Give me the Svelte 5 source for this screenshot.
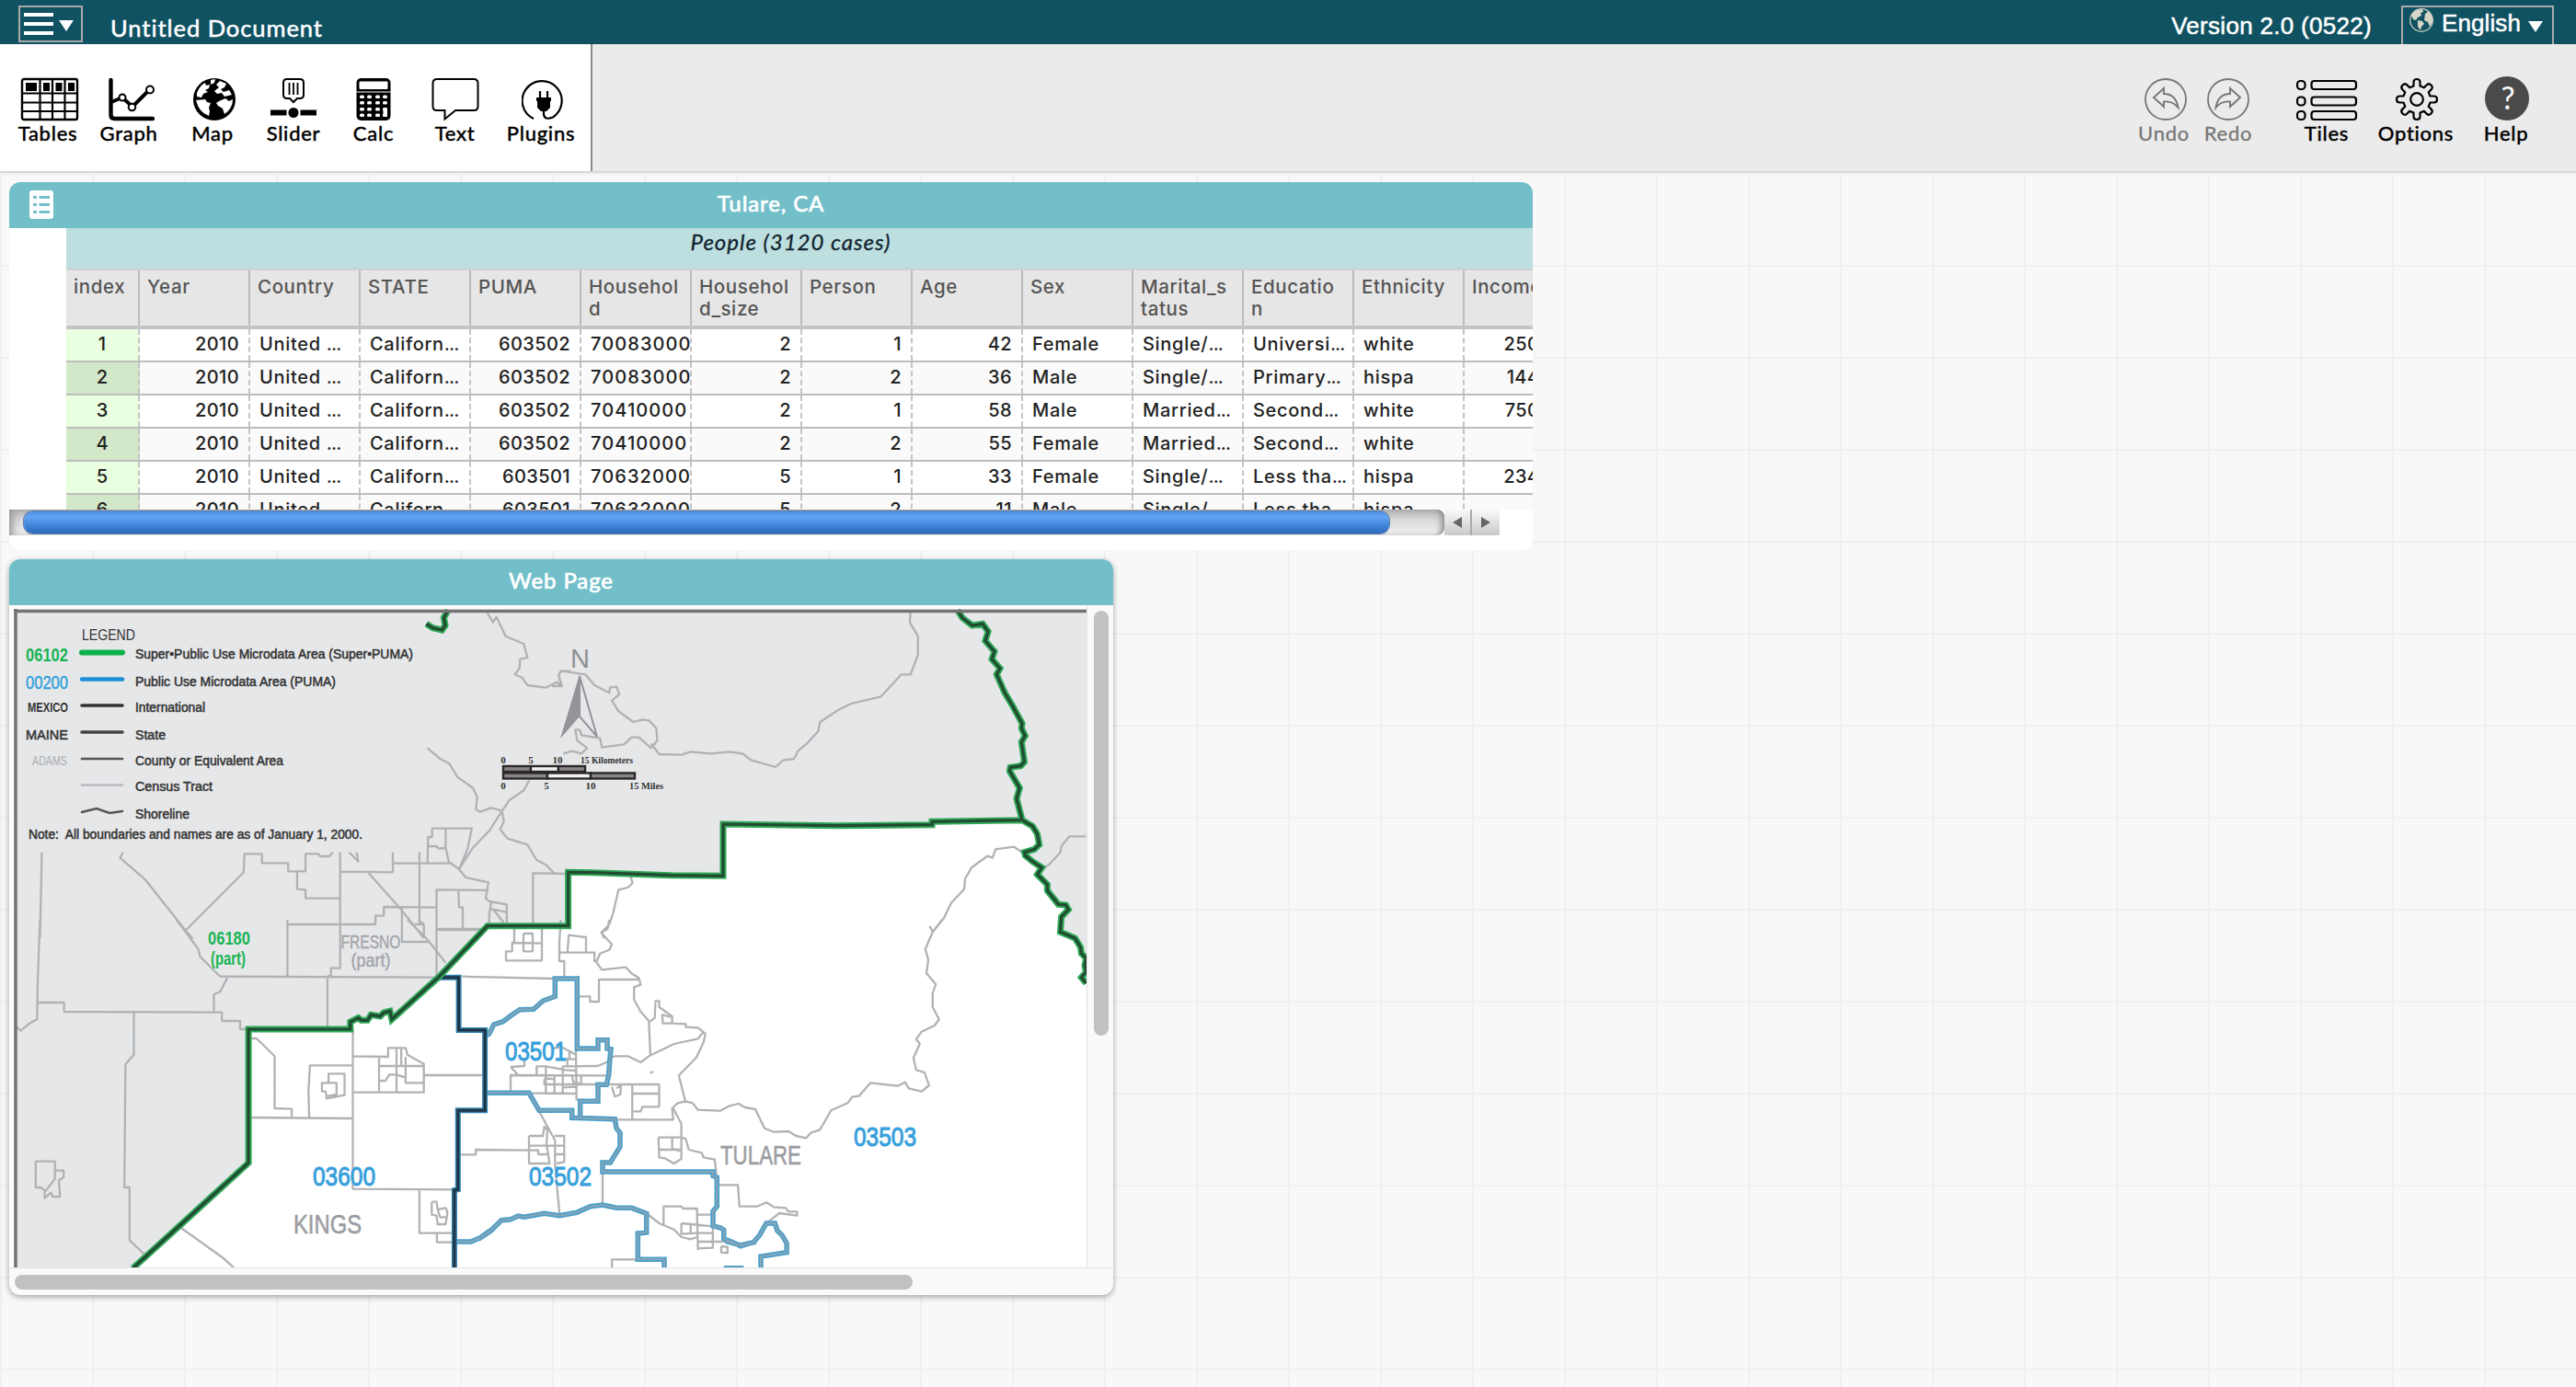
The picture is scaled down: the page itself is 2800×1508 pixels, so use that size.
<script>
  const tools = [
    { id: 'tables', label: 'Tables' },
    { id: 'graph', label: 'Graph' },
    { id: 'map', label: 'Map' },
    { id: 'slider', label: 'Slider' },
    { id: 'calc', label: 'Calc' },
    { id: 'text', label: 'Text' },
    { id: 'plugins', label: 'Plugins' }
  ];

  const columns = ['index', 'Year', 'Country', 'STATE', 'PUMA', 'Househol d', 'Househol d_size', 'Person', 'Age', 'Sex', 'Marital_s tatus', 'Educatio n', 'Ethnicity', 'Income'];
  const kinds = ['idx', 'num', 'txt', 'txt', 'num', 'long', 'num', 'num', 'num', 'txt', 'txt', 'txt', 'txt', 'num'];
  const rows = [
    ['1', '2010', 'United ...', 'Californ...', '603502', '700830000', '2', '1', '42', 'Female', 'Single/...', 'Universi...', 'white', '25000'],
    ['2', '2010', 'United ...', 'Californ...', '603502', '700830000', '2', '2', '36', 'Male', 'Single/...', 'Primary...', 'hispa', '14400'],
    ['3', '2010', 'United ...', 'Californ...', '603502', '70410000', '2', '1', '58', 'Male', 'Married...', 'Second...', 'white', '75000'],
    ['4', '2010', 'United ...', 'Californ...', '603502', '70410000', '2', '2', '55', 'Female', 'Married...', 'Second...', 'white', ''],
    ['5', '2010', 'United ...', 'Californ...', '603501', '70632000', '5', '1', '33', 'Female', 'Single/...', 'Less tha...', 'hispa', '23400'],
    ['6', '2010', 'United ...', 'Californ...', '603501', '70632000', '5', '2', '11', 'Male', 'Single/...', 'Less tha...', 'hispa', '']
  ];

  // Map sheets: origin and units per pixel of each surveyed block.
  const sheets = {
    A: [0, 600, 620 / 1568, 1 / 3],
    B: [600, 600, 630 / 1568, 1 / 3],
    C: [0, 1000, 620 / 1568, 1 / 3],
    D: [600, 1000, 630 / 1568, 1 / 3],
    E: [520, 980, 1 / 3, 1 / 3]
  };
  const project = (key, list) => {
    const [ox, oy, sx, sy] = sheets[key];
    return list.trim().split(/\s+/).map((p) => {
      const [x, y] = p.split(',').map(Number);
      return `${(ox + x * sx).toFixed(1)},${(oy + y * sy).toFixed(1)}`;
    }).join(' ');
  };
  const path = (key, lists) => lists.map((l) => 'M' + project(key, l)).join(' ');

  const west = project('C', '365,1137 492,1000 683,793 683,357 963,357 963,333 985,320 993,328 1010,328 1020,310 1045,315 1055,303 1072,298 1077,325 1205,188 1340,20') + ' ' +
    project('A', '1562,1220 1562,1045') + ' ' + project('B', '110,1046 322,1055 463,1057 463,888 770,893 1028,890 1028,880 1270,875');
  const eastTop = project('B', '1097,190 1110,215 1137,240 1165,235 1180,260 1172,290 1197,325 1190,350 1212,380 1203,400 1225,460 1245,500 1272,560 1270,575 1280,600 1270,620 1278,685 1268,698 1240,703 1238,715 1265,770 1257,805 1272,875');
  const eastLow = project('B', '1272,875 1300,895 1313,920 1318,955 1305,970 1278,980 1280,990 1300,1010 1325,1030 1313,1052 1340,1085 1340,1105 1370,1150 1390,1152 1397,1167 1378,1190 1375,1240 1415,1260') + ' ' +
    project('D', '1430,90 1432,110 1445,125 1441,150 1445,170 1432,188 1445,207');
  const corner = project('A', '1172,235 1190,248 1215,255 1224,240 1220,215 1232,190');

  const green = [`M${west}`, `M${eastTop}`, `M${eastLow}`, `M${corner}`].join(' ');
  const county = `M${west} ${eastLow} 1184,1380 144,1380Z`;

  const blue = path('E', [
    '20,440 35,432 50,402 80,392 110,370 135,353 180,352 210,325 250,310 250,252 322,252 322,480 390,480 390,452 420,452 420,480 432,482 428,520 425,565 418,598 390,598 390,652 332,652 332,706',
    '20,625 165,625 198,682 305,682 305,706 445,710 450,740 462,755 462,800 430,852 405,852 405,882 765,882 765,895 778,900 778,995 765,1010 765,1058 790,1065 800,1072 800,1100 830,1112 855,1124 885,1115 905,1110',
    '0,1102 40,1075 75,1040 105,1037 130,1026 150,1030 215,1018 265,1025 320,1015 365,995 405,990 450,1000 500,1000 548,1018 548,1080 520,1083 520,1168 606,1168 606,1200',
    '800,1196 865,1196'
  ]) + path('C', ['1250,1050 1295,1050 1320,1037 1350,1012']) +
    path('D', ['470,1048 510,1062 545,1052 562,1028 580,990 603,990 610,1015 622,1028 635,1055 635,1085 565,1098 565,1136']);
  const navy = path('C', ['1205,188 1261,188 1261,360 1333,360 1333,622 1259,622 1259,880 1249,882 1249,1137']);

  const tract = [
    path('A', [
      '115,980 110,1260', '338,980 330,998 400,1070 510,1235 530,1262', '510,1235 670,1045 672,985 720,985 720,1015 792,1015 792,1042 840,1042 840,985 875,985 880,993 905,993 915,980',
      '817,1042 817,1100 840,1102 840,1130 935,1130', '935,980 935,1260', '935,1043 1080,1045 1080,980', '960,980 985,1010 980,980', '1010,1043 1105,1170 1165,1260',
      '1080,1016 1240,1016 1262,1035', '1153,980 1153,1215', '1175,1016 1177,930 1188,930 1188,902 1297,902 1285,970 1262,1035', '1225,902 1225,965 1235,1016', '1177,960 1200,960 1205,968 1225,966',
      '790,1260 790,1215 1032,1215 1032,1187 1055,1187 1055,1158 1200,1160', '1105,1160 1105,1260', '1200,1260 1200,1102 1343,1104', '1260,1102 1262,1160 1272,1160 1272,1230', '1200,1230 1340,1230',
      '1140,1215 1165,1215 1165,1255', '1262,1035 1280,1062 1310,1070 1343,1078 1335,1130 1350,1145 1345,1180 1345,1215', '1345,1140 1393,1150 1393,1210', '1350,1165 1393,1175', '1355,1165 1385,1210',
      '1262,1035 1300,965 1345,910 1380,845 1400,810 1440,778 1455,745', '1175,640 1210,675 1235,690 1258,735 1300,770 1312,800 1308,840 1320,848 1350,835 1380,845 1385,880 1375,905 1395,935 1450,955 1475,1005 1500,1020 1525,1050',
      '1465,1216 1465,1048 1562,1050', '1340,200 1355,230 1365,212 1390,275 1440,300 1450,345 1430,350 1428,380 1415,400 1435,410 1450,435 1500,443 1530,425 1545,438 1535,400 1545,388 1568,388'
    ]),
    path('B', [
      '0,438 25,438 18,400 25,388 90,400 115,435 155,460 157,442 175,440 182,465 162,485 180,520 220,555 245,547 262,550 282,575 285,615 268,640 235,605 215,605 195,628 135,638 130,608 80,598 75,580 63,580 68,615 95,640 80,658 55,650 30,658',
      '268,625 290,660 350,662 375,652 430,658 480,652 515,658 540,680 605,702 625,680 655,675 665,650 690,625 720,585 725,555 775,515 810,495 890,472 945,400 970,400 990,335 990,275 968,230 970,195',
      '1445,928 1400,928 1378,960 1375,980 1345,1020 1325,1035', '1272,980 1250,962 1200,970 1192,998 1178,992 1135,1030 1118,1065 1115,1100 1080,1145 1060,1195 1030,1240 1022,1222',
      '212,1055 218,1080 205,1095 180,1102 165,1180 155,1215 135,1240 140,1260'
    ]),
    path('C', [
      '110,0 104,190 102,325 85,335 57,362 42,345', '104,270 176,270 176,300 610,302 610,330 660,330 660,357 683,357', '368,300 368,440 345,472 342,873 356,873 356,1045 400,1095',
      '485,0 545,95 550,120 605,185 1200,188', '625,190 605,235 588,243 588,300', '790,0 790,185', '935,0 935,158 910,158 910,182 900,185 900,350', '1105,0 1105,72 1180,72 1225,140', '1120,0 1165,52 1180,72',
      '1200,0 1200,188', '1200,33 1320,33', '1150,0 1165,15 1165,52', '1270,185 1525,192', '683,387 705,387 755,445 755,615 802,617 802,650', '850,645 848,560 852,475 970,475', '683,645 970,648', '970,357 970,878 1250,880',
      '970,445 1067,447 1067,418 1115,418 1120,440 1165,470 1165,563 970,562', '1042,447 1042,562', '1042,477 1165,477', '1090,418 1090,562', '1103,418 1103,475', '1115,447 1115,532 1165,532', '1042,525 1060,525 1070,505 1090,505 1115,515',
      '1165,507 1333,507', '903,532 903,502 947,502 947,572 898,583 895,560 885,560 885,532 925,532 925,570 900,575', '1153,880 1153,1022 1249,1022', '1201,1022 1201,1052 1249,1052', '1259,766 1308,766 1308,750 1455,752',
      '98,788 151,788 151,845 125,885 112,873 98,873 98,788', '151,818 175,818 175,840 162,850 165,903 145,903 140,890 123,908 123,880', '495,1003 580,1075 615,1105 645,1137', '1187,920 1200,920 1203,945 1225,940 1230,955 1225,993 1203,993 1200,965 1187,962 1187,920', '1203,945 1210,970 1225,970'
    ]),
    path('D', [
      '155,0 150,30 133,42 162,80 155,98 130,110 120,138 135,163 200,155 215,175 235,190 240,212 222,220 222,260 240,300 262,330 266,440', '115,138 115,107 18,107', '42,107 45,50 92,57 92,107', '24,0 20,75 20,135 33,135 33,190',
      '72,250 103,250 103,267 127,267 127,195 238,195', '262,335 278,320 280,265 290,265 290,285 325,315 325,338 300,338 298,310 325,318', '325,338 362,340 362,350 395,352 415,372 410,400 390,450 343,508 362,598',
      '160,450 170,445 205,445 240,465 262,445 330,405 395,388 410,365', '75,537 290,537 290,610 245,610 240,625 218,625', '217,537 217,650', '217,567 290,567', '170,652 328,652 325,615 340,598 362,592 380,598 395,620 455,623 480,607 505,600 522,612 550,618 575,680 600,692 640,690 660,705 688,712 700,695 725,685 755,622 800,598 812,578 830,575 862,532 935,542 955,530 965,550 1000,560 1020,540 1008,498 985,490 978,450 995,405 985,390 1000,365 1035,345 1047,325 1030,285 1030,240 1038,210 1013,175 1018,130 1010,95 1030,40 1055,0',
      '1030,40 1022,20', '328,615 350,665 350,710 362,715 370,750 405,760 410,775 440,782 445,830', '288,710 350,710 350,780 330,795 305,778 290,775 288,710', '288,750 350,750', '325,710 325,745 345,755',
      '137,825 137,930', '450,865 503,865 507,935 555,935 580,922 600,937 632,940 640,952 663,952 663,965 615,957 585,985', '258,960 290,990 330,1010 350,1035 375,1042 392,1035', '302,995 302,935 350,935 355,942 392,942 395,1078', '395,962 432,962', '350,990 435,1000 435,1070 395,1072', '350,990 350,1025 392,1022', '375,993 375,1022', '395,1022 435,1022', '395,1050 470,1050', '458,1065 475,1067 475,1087 458,1085 458,1065', '162,1136 162,1108 230,1108', '162,545 170,577 185,570 187,540 175,550'
    ]),
    path('E', [
      '117,90 117,135 110,135 110,163 90,163 90,193 207,193 207,90', '110,135 207,137', '147,105 177,105 177,163 147,163 147,105', '105,540 150,537 150,515', '105,540 128,565', '105,625 105,567 425,568', '105,625 320,627', '190,567 190,538 220,538 285,550 320,552',
      '318,480 320,650', '220,538 220,625', '248,567 248,625', '275,537 275,625', '305,567 310,590 335,595 335,567', '215,577 248,580', '212,597 590,597', '275,607 320,605', '275,538 390,537 432,518', '215,598 215,580', '290,510 290,535', '240,480 270,475 300,490 318,500', '297,490 297,515 320,515',
      '198,685 250,780 250,860 265,1025', '165,765 210,765 215,735 225,745 222,790 232,855 165,855 165,765', '165,797 280,797', '165,812 195,812 195,825 225,825', '248,765 280,765 280,850 255,855', '250,825 280,825', '570,555 560,560'
    ])
  ].join(' ');

  const legend = [
    { y: 403 + 313, mark: 709.5, name: 'Super•Public Use Microdata Area (Super•PUMA)', w: 302, color: '#0db14b', sw: 6 },
    { y: 746, mark: 738.5, name: 'Public Use Microdata Area (PUMA)', w: 218, color: '#1c90d4', sw: 4.5 },
    { y: 774, mark: 767, name: 'International', w: 76, color: '#333', sw: 3.6 },
    { y: 804, mark: 796, name: 'State', w: 33, color: '#444', sw: 3.6 },
    { y: 832, mark: 825, name: 'County or Equivalent Area', w: 161, color: '#555', sw: 2.6 },
    { y: 860, mark: 853.5, name: 'Census Tract', w: 84, color: '#b9bbbd', sw: 2.6 },
    { y: 890, mark: 0, name: 'Shoreline', w: 59, color: '#555', sw: 2.6 }
  ];
</script>

<div class="app">
  <header class="menubar">
    <button class="hamburger" aria-label="Menu">
      <svg width="56" height="28" viewBox="0 0 56 28"><path d="M0 4h32M0 14h32M0 24h32" stroke="#fff" stroke-width="4" /><path d="M38 10h16l-8 12z" fill="#fff" /></svg>
    </button>
    <span class="doc">Untitled Document</span>
    <span class="version">Version 2.0 (0522)</span>
    <button class="lang">
      <svg class="globe" width="28" height="28" viewBox="0 0 28 28"><circle cx="14" cy="14" r="12.3" fill="none" stroke="#d5d5c8" stroke-width="1.2" /><path d="M3 8l5-5 7-1 1 3-3 1 1 3-4 2-2 3-3-1-2-4zM10 14l5 1 2 3-3 3-1 4-3-4zM18 7l4-3 4 6 0 6-3 5-2-5-4-2z" fill="#d5d5c8" /></svg>
      <span>English</span>
      <svg width="16" height="14" viewBox="0 0 16 14"><path d="M0 1h16l-8 12z" fill="#fff" /></svg>
    </button>
  </header>

  <nav class="toolbar">
    <div class="shelf">
      {#each tools as tool}
        <button class="tool {tool.id}">
          {#if tool.id === 'tables'}
            <svg width="64" height="48" viewBox="0 0 64 48"><rect x="2" y="2" width="60" height="44" rx="2" fill="#fff" stroke="#000" stroke-width="2.4" /><path d="M2 17.500h60M2 27.500h60M2 37h60M21.500 2v44M35 2v44M48.500 2v44" stroke="#000" stroke-width="2.200" /><path d="M6 6h12v9H6zM25 6h7v9h-7zM38.500 6h7v9h-7zM52 6h7v9h-7z" /></svg>
          {:else if tool.id === 'graph'}
            <svg width="52" height="48" viewBox="0 0 52 48"><path d="M3.500 3v38q0 4 4 4H49" fill="none" stroke="#000" stroke-width="4.400" stroke-linecap="round" /><path d="M4 27l12-5 11 10L46 13" fill="none" stroke="#000" stroke-width="4" /><g fill="#fff" stroke="#000" stroke-width="2"><circle cx="16" cy="22" r="3.500" /><circle cx="26.500" cy="32.500" r="3.800" /><circle cx="46" cy="13.500" r="4" /></g></svg>
          {:else if tool.id === 'map'}
            <svg width="48" height="48" viewBox="0 0 48 48"><circle cx="24" cy="24" r="22" fill="#000" stroke="#000" stroke-width="2" /><path d="M5 17q3-8 9-11l1 3 4-1-1 4-4 2 3 2-5 2-2 4-5-1zM4 25l10-1 2 3 4 1-2 5 1 4-1 5q-11-4-14-17zM30 4l7 3-2 4-4 2 3 3 6-2 3 5-8 2-3-4-5 1-3-3 5-4-3-3zM29 26l7-3 4 3 4-2q0 10-9 16l-2-6-5-3-2-3zM20 3l5-1-1 4-4 2z" fill="#fff" /></svg>
          {:else if tool.id === 'slider'}
            <svg width="52" height="48" viewBox="0 0 52 48"><path d="M19 2h14q4 0 4 4v13q0 4-4 4h-3l-4 4-4-4h-3q-4 0-4-4V6q0-4 4-4z" fill="#fff" stroke="#000" stroke-width="2" /><path d="M21.500 6v13M26 6v13M30.500 6v13" stroke="#000" stroke-width="1.800" /><path d="M1 38.500h17.500M33.500 38.500H51" stroke="#000" stroke-width="6" /><circle cx="26" cy="38.500" r="5.500" /></svg>
          {:else if tool.id === 'calc'}
            <svg width="40" height="48" viewBox="0 0 40 48"><rect x="1.500" y="1" width="37" height="46" rx="5" /><rect x="4.500" y="4.500" width="31" height="8.500" rx="1" fill="#fff" /><path d="M1.500 16h37" stroke="#fff" stroke-width="1" /><g fill="#fff">{#each [19.5, 26, 33, 39.5] as y}{#each [5, 13, 22, 30] as x}<rect {x} {y} width="5" height="3.600" rx="1.500" />{/each}{/each}<rect x="30.500" y="33" width="4.500" height="10" rx="1.500" /></g></svg>
          {:else if tool.id === 'text'}
            <svg width="52" height="48" viewBox="0 0 52 48"><path d="M6 2h40q4.500 0 4.500 4.500v25q0 4.500-4.500 4.500H26L14.500 45.500V36H6q-4.500 0-4.500-4.500v-25Q1.500 2 6 2z" fill="#fff" stroke="#000" stroke-width="2" /></svg>
          {:else}
            <svg width="48" height="48" viewBox="0 0 48 48"><path d="M13 45A21.500 21.500 0 1 1 34 43.500q-9 3.500-10-3v-6" fill="none" stroke="#000" stroke-width="2.200" /><path d="M20 15v10M28 15v10" stroke="#000" stroke-width="2.200" /><path d="M16 22h16v4h-1v7l-4 4h-6l-4-4v-7h-1z" /></svg>
          {/if}
          <span>{tool.label}</span>
        </button>
      {/each}
    </div>
    <div class="actions">
      <button class="tool dim undo"><svg width="48" height="48" viewBox="0 0 48 48"><circle cx="24" cy="24" r="22" fill="none" stroke="#777" stroke-width="1.800" /><path d="M11 22L22 12v6q13 0 15.500 15-6-7.500-15.500-6.500v5.500z" fill="none" stroke="#777" stroke-width="1.900" /></svg><span>Undo</span></button>
      <button class="tool dim redo"><svg width="48" height="48" viewBox="0 0 48 48"><circle cx="24" cy="24" r="22" fill="none" stroke="#777" stroke-width="1.800" /><path d="M37 22L26 12v6q-13 0-15.500 15 6-7.500 15.500-6.500v5.500z" fill="none" stroke="#777" stroke-width="1.900" /></svg><span>Redo</span></button>
      <button class="tool tiles"><svg width="68" height="48" viewBox="0 0 68 48"><g fill="none" stroke="#000" stroke-width="2.200"><rect x="2" y="4" width="8.500" height="9" rx="3.600" /><rect x="17.500" y="4" width="48.500" height="9" rx="3" /><rect x="2" y="21.500" width="8.500" height="9" rx="3.600" /><rect x="17.500" y="21.500" width="48.500" height="9" rx="3" /><rect x="2" y="37" width="8.500" height="9" rx="3.600" /><rect x="17.500" y="37" width="48.500" height="9" rx="3" /></g></svg><span>Tiles</span></button>
      <button class="tool options"><svg width="48" height="48" viewBox="0 0 48 48"><g fill="none" stroke="#000" stroke-width="2.200" stroke-linejoin="round"><circle cx="24" cy="24" r="6.800" /><path d="M20.500 9.500V5.500Q20.500 2 24 2T27.500 5.500V9.500L31.800 11.300L34.600 8.400Q37 6 39.500 8.500T39.600 13.400L36.700 16.200L38.500 20.500H42.500Q46 20.500 46 24T42.500 27.500H38.500L36.700 31.800L39.600 34.600Q42 37 39.500 39.500T34.600 39.600L31.800 36.700L27.500 38.500V42.500Q27.500 46 24 46T20.500 42.500V38.500L16.200 36.700L13.400 39.600Q11 42 8.500 39.500T8.400 34.600L11.300 31.800L9.500 27.500H5.500Q2 27.500 2 24T5.500 20.500H9.500L11.300 16.200L8.400 13.400Q6 11 8.500 8.500T13.400 8.400L16.200 11.300Z" /></g></svg><span>Options</span></button>
      <button class="tool help"><svg width="48" height="48" viewBox="0 0 48 48"><circle cx="25" cy="23" r="24" fill="#4a4a4a" /><text x="26.500" y="35" text-anchor="middle" font-family="Lato, sans-serif" font-size="34" fill="#fff">?</text></svg><span>Help</span></button>
    </div>
  </nav>

  <main class="canvas">
    <section class="tile table-tile">
      <h2 class="title"><svg class="card-icon" width="28" height="32" viewBox="0 0 28 32"><rect x="1" y="0" width="26" height="31" rx="3" fill="#fff" /><path d="M5 7.500h4M5 15.500h4M5 23.500h4M11.500 7.500H23M11.500 15.500H23M11.500 23.500H23" stroke="#72bfca" stroke-width="3" /></svg><span>Tulare, CA</span></h2>
      <div class="sheet">
        <div class="collection">People (3120 cases)</div>
        <div class="heads">
          {#each columns as c, i}<div class="head" class:first={i === 0}>{#each c.split(' ') as part}<div>{part}</div>{/each}</div>{/each}
        </div>
        <div class="rows">
          {#each rows as row}
            <div class="row">{#each row as v, i}<div class="cell {kinds[i]}">{v.replace('...', '')}{#if v.endsWith('...')}<span class="dots">...</span>{/if}</div>{/each}</div>
          {/each}
        </div>
      </div>
      <div class="hscroll">
        <div class="track"><div class="thumb"></div></div>
        <div class="arrow"><svg width="12" height="14" viewBox="0 0 12 14"><path d="M11 1v12L1 7z" fill="#666" /></svg></div>
        <div class="arrow last"><svg width="12" height="14" viewBox="0 0 12 14"><path d="M1 1v12l10-6z" fill="#666" /></svg></div>
      </div>
    </section>

    <section class="tile web-tile">
      <h2 class="title"><span>Web Page</span></h2>
      <div class="page">
        <svg class="puma" width="1166" height="716" viewBox="15 662 1166 716">
          <rect x="15" y="662" width="1166" height="716" fill="#e6e7e9" />
          <path d={county} fill="#fff" />
          <path d={tract} fill="none" stroke="#b0b2b4" stroke-width="2.300" stroke-linejoin="round" />
          <path d={blue} fill="none" stroke="#4b9fca" stroke-width="5.500" />
          <path d={blue} fill="none" stroke="#86a6b8" stroke-width="2" />
          <path d={navy} fill="none" stroke="#3482ae" stroke-width="6" />
          <path d={navy} fill="none" stroke="#1e3444" stroke-width="3" />
          <path d={green} fill="none" stroke="#2fa857" stroke-width="7" />
          <path d={green} fill="none" stroke="#214a31" stroke-width="3.200" />
          <path d="M15 664.500H1181M17 662V1378" stroke="#777274" stroke-width="3.500" />

          <g font-family="Liberation Sans, sans-serif" fill="#333" stroke-linecap="round">
            <text x="89" y="696" font-size="17" textLength="58" lengthAdjust="spacingAndGlyphs">LEGEND</text>
            {#each legend as l}
              <text class="inked" x="147" y={l.y} font-size="14" textLength={l.w} lengthAdjust="spacingAndGlyphs">{l.name}</text>
              {#if l.mark}<path d="M89 {l.mark}H133" stroke={l.color} stroke-width={l.sw} />{/if}
            {/each}
            <path d="M89 883l16-4 14 5 14-2" fill="none" stroke="#555" stroke-width="2.500" />
            <text x="28" y="719" font-size="20" font-weight="700" fill="#19b454" textLength="46" lengthAdjust="spacingAndGlyphs">06102</text>
            <text x="28" y="749" font-size="20" fill="#2f9fdb" stroke="#2f9fdb" stroke-width=".4" textLength="46" lengthAdjust="spacingAndGlyphs">00200</text>
            <text x="30" y="774" font-size="14" font-weight="700" textLength="44" lengthAdjust="spacingAndGlyphs">MEXICO</text>
            <text class="inked" x="28" y="804" font-size="14.500" textLength="46" lengthAdjust="spacingAndGlyphs">MAINE</text>
            <text x="35" y="832" font-size="14" fill="#aaacb0" textLength="38" lengthAdjust="spacingAndGlyphs">ADAMS</text>
            <text class="inked" x="31" y="912" font-size="14" textLength="363" lengthAdjust="spacingAndGlyphs" xml:space="preserve">Note:  All boundaries and names are as of January 1, 2000.</text>
            <g text-anchor="middle" font-size="19.500" font-weight="700" fill="#19b454">
              <text x="249" y="1027" textLength="46" lengthAdjust="spacingAndGlyphs">06180</text>
              <text x="248" y="1049" textLength="38" lengthAdjust="spacingAndGlyphs">(part)</text>
            </g>
            <g font-size="20" fill="#a3a5a9" stroke="#a3a5a9" stroke-width=".4" text-anchor="middle">
              <text x="403" y="1031" textLength="65" lengthAdjust="spacingAndGlyphs">FRESNO</text>
              <text x="403" y="1051" textLength="43" lengthAdjust="spacingAndGlyphs">(part)</text>
            </g>
            <g font-size="30" fill="#9b9da1" stroke="#9b9da1" stroke-width=".6">
              <text x="319" y="1341" textLength="74" lengthAdjust="spacingAndGlyphs">KINGS</text>
              <text x="783" y="1266" textLength="88" lengthAdjust="spacingAndGlyphs">TULARE</text>
            </g>
            <g font-size="30" fill="#37a0dc" stroke="#37a0dc" stroke-width="1">
              <text x="549" y="1153" textLength="67" lengthAdjust="spacingAndGlyphs">03501</text>
              <text x="575" y="1289" textLength="68" lengthAdjust="spacingAndGlyphs">03502</text>
              <text x="928" y="1246" textLength="68" lengthAdjust="spacingAndGlyphs">03503</text>
              <text x="340" y="1289" textLength="68" lengthAdjust="spacingAndGlyphs">03600</text>
            </g>
            <text x="620" y="726" font-size="30" fill="#8f9194" textLength="21" lengthAdjust="spacingAndGlyphs">N</text>
          </g>
          <path d="M630 733L609 803 630 779z" fill="#929497" />
          <path d="M630 735L649 801 630 779z" fill="none" stroke="#929497" stroke-width="2" />
          <g fill="#8a8688" stroke="#2c282a" stroke-width="2.400">
            <rect x="547" y="833" width="30" height="6" /><rect x="577" y="833" width="30" height="6" fill="#f2f2f2" /><rect x="607" y="833" width="29" height="6" />
            <rect x="547" y="840.500" width="48" height="6" /><rect x="595" y="840.500" width="47" height="6" fill="#f2f2f2" /><rect x="642" y="840.500" width="48" height="6" />
          </g>
          <g font-family="Liberation Serif, serif" font-weight="700" font-size="11" fill="#333" text-anchor="middle">
            <text x="547" y="830">0</text><text x="577" y="830">5</text><text x="606" y="830">10</text>
            <text x="631" y="830" text-anchor="start" textLength="57" lengthAdjust="spacingAndGlyphs">15 Kilometers</text>
            <text x="547" y="858">0</text><text x="594" y="858">5</text><text x="642" y="858">10</text>
            <text x="684" y="858" text-anchor="start" textLength="37" lengthAdjust="spacingAndGlyphs">15 Miles</text>
          </g>
        </svg>
        <div class="vbar"><div class="vthumb"></div></div>
      </div>
      <div class="hbar"><div class="hthumb"></div></div>
    </section>
  </main>
</div>

<style>
  :global(body) { margin: 0; overflow: hidden; }
  .app { width: 2800px; height: 1508px; display: flex; flex-direction: column; overflow: hidden; font-family: Lato, sans-serif; }
  button { border: 0; background: none; padding: 0; margin: 0; font: inherit; color: inherit; }
  svg { display: block; flex: none; }

  .menubar { height: 48px; box-sizing: border-box; flex: none; background: #105262; color: #fff; display: flex; align-items: flex-start; padding: 6px 24px 0 20px; overflow: hidden; }
  .hamburger { width: 70px; height: 40px; box-sizing: border-box; border: 2px solid #aaa; padding: 4px; }
  .doc { margin-left: 30px; padding-top: 8px; font-size: 25.5px; line-height: 32px; letter-spacing: .95px; -webkit-text-stroke: .5px #fff; }
  .version { margin-left: auto; padding-top: 7px; font-family: 'Liberation Sans', Arial, sans-serif; font-size: 26px; line-height: 30px; letter-spacing: .3px; -webkit-text-stroke: .5px #fff; }
  .lang { margin-left: 32px; width: 166px; height: 46px; box-sizing: border-box; border: 2px solid #aaa; display: flex; align-items: flex-start; padding: 0 10px 0 6px; font-family: 'Liberation Sans', Arial, sans-serif; font-size: 26px; line-height: 34px; white-space: nowrap; -webkit-text-stroke: .5px #fff; }
  .lang span { margin: 0 8px 0 8px; letter-spacing: .1px; }
  .lang svg:last-child { margin-top: 14px; }

  .toolbar { height: 140px; box-sizing: border-box; flex: none; background: #ebebeb; border-bottom: 2px solid #d8d8d8; display: flex; }
  .shelf { width: 644px; box-sizing: border-box; background: #fff; border-right: 2px solid #8b8b8b; display: grid; grid-template-columns: 88px 88px 94px 82px 92px 85px 102px; padding-left: 8px; }
  .tool { display: flex; flex-direction: column; align-items: center; justify-content: flex-start; padding-top: 36px; font-size: 22px; line-height: 26px; letter-spacing: .75px; color: #000; -webkit-text-stroke: .5px currentColor; }
  .tool svg { -webkit-text-stroke: 0; }
  .tables svg { margin-left: 4px; }
  .graph svg { margin-left: 6px; }
  .map svg, .undo svg { margin-left: 3px; }
  .plugins svg { margin-left: 5px; }
  .actions { margin-left: auto; margin-right: 38px; display: flex; }
  .actions .tool { width: 60px; }
  .actions .dim { color: #777; -webkit-text-stroke-width: .3px; }
  .actions .redo { margin-left: 10px; }
  .actions .tiles { width: 76px; margin-left: 39px; }
  .actions .options { width: 90px; margin-left: 14px; }
  .options svg { margin-left: 2px; }
  .actions .help { width: 76px; margin-left: 15px; }
  .help svg { overflow: visible; }

  .canvas { flex: 1; box-sizing: border-box; padding: 10px; display: flex; flex-direction: column; align-items: flex-start; gap: 10px; background-color: #f8f8f8;
    background-image: linear-gradient(90deg, #efefef 2px, transparent 2px), linear-gradient(#efefef 2px, transparent 2px); background-size: 100px 100px; }
  .tile { border-radius: 12px; background: #fff; overflow: hidden; flex: none; }
  .title { margin: 0; height: 50px; box-sizing: border-box; background: #72bfca; color: #fff; display: grid; place-items: center; font-size: 24px; font-weight: 400; letter-spacing: .9px; -webkit-text-stroke: .7px #fff; padding-bottom: 5px; }
  .title > * { grid-area: 1 / 1; }
  .card-icon { justify-self: start; margin: 5px 0 0 21px; }

  .table-tile { width: 1656px; height: 400px; }
  .sheet { margin-left: 62px; height: 306px; overflow: hidden; background: #fafafa; }
  .collection { height: 44px; background: #bddfdf; text-align: center; font-style: italic; font-size: 24px; line-height: 29px; letter-spacing: 1px; color: #12222e; padding-right: 19px; -webkit-text-stroke: .3px #12222e; }
  .heads { height: 66px; box-sizing: border-box; border-top: 2px solid #d0d0d0; border-bottom: 4px solid #c4c4c4; display: flex; width: 1640px; background: #e6e6e6; }
  .head { width: 120px; flex: none; box-sizing: border-box; border-right: 2px solid #bcbcbc; padding: 6px 0 0 8px; font-family: Inter, sans-serif; font-size: 20.5px; line-height: 24px; font-weight: 500; letter-spacing: .6px; color: #555; white-space: nowrap; }
  .head.first { width: 80px; }
  .row { height: 36px; box-sizing: border-box; display: flex; width: 1640px; border-bottom: 2px solid #bdbdbd; background: #fff; }
  .row:nth-child(even) { background: #fafafa; }
  .cell { width: 120px; flex: none; box-sizing: border-box; border-right: 2px dashed #c4c4c4; padding: 0 10px; font-family: Inter, sans-serif; font-size: 20px; line-height: 33px; font-weight: 500; color: #222; white-space: nowrap; overflow: hidden; }
  .idx { width: 80px; padding: 0; text-align: center; background: #eafee0; }
  .row:nth-child(even) .idx { background: #d2e8c8; }
  .num { text-align: right; letter-spacing: .4px; }
  .txt { letter-spacing: .7px; }
  .long { padding: 0 0 0 10px; letter-spacing: 1.1px; }
  .dots { letter-spacing: -.9px; }

  .hscroll { width: 1620px; height: 28px; display: flex; }
  .track { flex: 1; box-sizing: border-box; padding: 2px 0 2px 16px; border-radius: 0 8px 8px 0; background: linear-gradient(#b4b4b4, #dcdcdc 45%, #f2f2f2); box-shadow: inset -6px 0 6px -3px #888, inset 8px 0 8px -4px #999; }
  .thumb { width: 1484px; height: 24px; border-radius: 10px; box-shadow: 0 0 0 1px #5c7fae; background: linear-gradient(#4f8ee0, #62a4f4 25%, #4388dc 60%, #2a68ba); }
  .arrow { width: 30px; box-sizing: border-box; display: grid; place-items: center; background: linear-gradient(#fafafa, #c8c8c8); border-right: 2px solid #aaa; }
  .arrow.last { border: 0; }

  .web-tile { width: 1200px; height: 800px; background: #fafafa; box-shadow: 0 2px 6px rgba(0, 0, 0, .35); }
  .page { height: 720px; box-sizing: border-box; display: flex; }
  .puma { border-top: 4px solid #fff; border-left: 5px solid #fff; }
  .inked { stroke: #333; stroke-width: .5px; }
  .vbar { flex: 1; border-left: 1px solid #e2e2e2; padding: 6px 0 0 7px; }
  .vthumb { width: 16px; height: 462px; border-radius: 8px; background: #c1c1c1; }
  .hbar { border-top: 1px solid #e4e4e4; padding: 7px 0 0 6px; }
  .hthumb { width: 976px; height: 16px; border-radius: 8px; background: #c1c1c1; }
</style>
